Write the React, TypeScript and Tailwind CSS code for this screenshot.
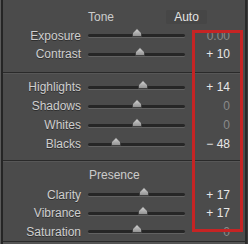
import React from 'react';

type Row = { label: string; value: string; pos: number; zero?: boolean };

const toneA: Row[] = [
  { label: 'Exposure', value: '0.00', pos: 50, zero: true },
  { label: 'Contrast', value: '+ 10', pos: 54 },
];

const toneB: Row[] = [
  { label: 'Highlights', value: '+ 14', pos: 57 },
  { label: 'Shadows', value: '0', pos: 50, zero: true },
  { label: 'Whites', value: '0', pos: 50, zero: true },
  { label: 'Blacks', value: '\u2212 48', pos: 29 },
];

const presence: Row[] = [
  { label: 'Clarity', value: '+ 17', pos: 58 },
  { label: 'Vibrance', value: '+ 17', pos: 57 },
  { label: 'Saturation', value: '0', pos: 50, zero: true },
];

function Thumb({ pos }: { pos: number }) {
  return (
    <svg
      width="10"
      height="9"
      viewBox="0 0 10 9"
      className="absolute top-[-6px]"
      style={{ left: `calc(${pos}% - 5px)` }}
    >
      <defs>
        <linearGradient id="th" x1="0" y1="0" x2="0" y2="1">
          <stop offset="0" stopColor="#d6d6d6" />
          <stop offset="1" stopColor="#8e8e8e" />
        </linearGradient>
      </defs>
      <polygon points="5,0.5 9.5,5 9.5,8.5 0.5,8.5 0.5,5" fill="url(#th)" stroke="#3a3a3a" strokeWidth="0.8" />
    </svg>
  );
}

function SliderRow({ row }: { row: Row }) {
  return (
    <div className="flex h-[19px] items-center">
      <div className="w-[79px] pr-[1px] text-right text-[12px] text-[#cfcfcf] [text-shadow:0_1px_0_#2e2e2e]">
        {row.label}
      </div>
      <div className="relative ml-[6px] h-[3px] w-[97px] rounded-full bg-[#262626] shadow-[0_1px_0_#626262]">
        <Thumb pos={row.pos} />
      </div>
      <div
        className={
          'w-[45px] text-right text-[12px] ' +
          (row.zero ? 'text-[#8a8a8a]' : 'text-[#e8e8e8]')
        }
      >
        {row.value}
      </div>
    </div>
  );
}

export default function App() {
  return (
    <div className="flex h-[244px] w-[248px] bg-[#4b4b4b] font-['Liberation_Sans',Arial,sans-serif]">
      <div className="w-[1px] bg-[#5a5a5a]" />
      <div className="w-[2px] bg-[#252525]" />
      <div className="relative flex flex-1 flex-col">
        <div className="flex h-[241px] flex-col">
          <div className="mt-[7px] flex h-[20px] items-center">
            <div className="ml-[85px] w-[78px] text-[12px] text-[#cccccc]">Tone</div>
            <div className="flex h-[14px] w-[41px] items-center justify-center rounded-[2px] bg-[#464646] text-[12px] text-[#e4e4e4]">
              Auto
            </div>
          </div>
          {toneA.map((r) => (
            <SliderRow key={r.label} row={r} />
          ))}
          <div className="mt-[8px] h-[1px] w-[238px] bg-[#2a2a2a] shadow-[0_1px_0_#575757]" />
          <div className="mt-[5px]">
            {toneB.map((r) => (
              <SliderRow key={r.label} row={r} />
            ))}
          </div>
          <div className="mt-[6px] h-[1px] w-[238px] bg-[#2a2a2a] shadow-[0_1px_0_#575757]" />
          <div className="mt-[5px] flex h-[20px] items-center">
            <div className="ml-[86px] text-[12px] text-[#cccccc]">Presence</div>
          </div>
          {presence.map((r) => (
            <SliderRow key={r.label} row={r} />
          ))}
        </div>
        <div className="h-[1px] bg-[#2a2a2a]" />
        <div className="flex-1 bg-[#555555]" />
        <div className="absolute left-[189px] top-[30px] h-[202px] w-[51px] border-[3px] border-[#c62424]" />
      </div>
      <div className="w-[2px] bg-[#2a2a2a]" />
      <div className="w-[1px] bg-[#3c3c3c]" />
    </div>
  );
}
